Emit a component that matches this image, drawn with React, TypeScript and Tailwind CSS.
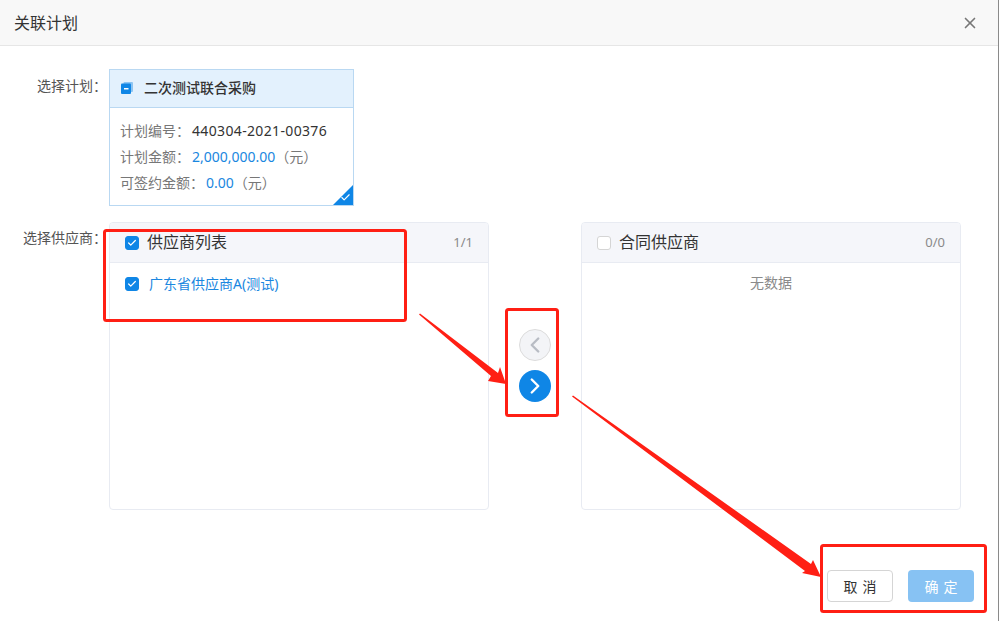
import React from 'react';
import { Check, ChevronLeft, ChevronRight, X } from 'lucide-react';

const FONT = "font-['Noto_Sans','Noto_Sans_CJK_SC',sans-serif]";

const Checkbox: React.FC<{ checked?: boolean }> = ({ checked }) => (
    <span className={`flex h-[14px] w-[14px] shrink-0 items-center justify-center rounded-[3px] border ${checked ? 'border-[#0f86e6] bg-[#0f86e6]' : 'border-[#d5d5d5] bg-white'}`}>
        {checked && <Check className="h-[10px] w-[10px] text-white" strokeWidth={3} />}
    </span>
);

const PlanIcon = () => (
    <svg width="12" height="12" viewBox="0 0 12 12" className="shrink-0">
        <rect x="2.5" y="0" width="9.5" height="10" rx="1" fill="#8cc4f2" />
        <rect x="0" y="1.5" width="10" height="10.5" rx="1" fill="#0f86e6" />
        <rect x="3" y="6" width="4.5" height="1.5" fill="#fff" />
    </svg>
);

const Panel: React.FC<{ title: string; count: string; checked?: boolean; children: React.ReactNode }> = ({ title, count, checked, children }) => (
    <div className="h-[288px] w-[380px] overflow-hidden rounded-[4px] border border-[#e8ebf2] bg-white">
        <div className="flex h-[40px] items-center border-b border-[#e8ebf2] bg-[#f5f6fa] px-[15px]">
            <Checkbox checked={checked} />
            <span className="-mt-[2px] ml-2 text-[16px] text-[#333]">{title}</span>
            <span className="ml-auto text-[13px] text-[#8a8a8a]">{count}</span>
        </div>
        {children}
    </div>
);

const Annotations = () => (
    <svg width="999" height="621" viewBox="0 0 999 621" className="pointer-events-none absolute left-0 top-0">
        <g fill="none" stroke="#ff1f14" strokeWidth="3" strokeLinejoin="round">
            <rect x="104.5" y="230.5" width="301" height="90" rx="2" />
            <rect x="506.5" y="309.5" width="51" height="106" rx="2" />
            <rect x="821.5" y="545.5" width="164" height="66" rx="2" />
        </g>
        <polygon points="419,314.5 420,313.5 498,373 500,367 506,384 488,381 491,376" fill="#ff1f14" />
        <polygon points="572,396.5 573,395.5 811,564 813,560 821,577 802,573 805,571" fill="#ff1f14" />
    </svg>
);

const App: React.FC = () => {
    return (
        <div className={`relative h-[621px] w-[999px] overflow-hidden border-r border-[#8a8a8a] bg-white ${FONT}`}>
            <div className="flex h-[46px] items-center justify-between border-b border-[#e6e6e6] bg-[#f8f8f8] pl-[14px] pr-[19px]">
                <span className="text-[16px] text-[#333]">关联计划</span>
                <X className="h-[18px] w-[18px] text-[#777]" strokeWidth={2.2} />
            </div>

            <div className="flex pt-[23px]">
                <div className="w-[107px] pt-[5px] text-right text-[14px] leading-[24px] text-[#555]">选择计划：</div>
                <div className="relative ml-[2px] h-[137px] w-[245px] overflow-hidden border border-[#b9d8f2] bg-white">
                    <div className="flex h-[38px] items-center gap-[11px] border-b border-[#b9d8f2] bg-[#e3f1fd] pb-[2px] pl-[11px]">
                        <PlanIcon />
                        <span className="text-[14px] font-medium text-[#333]">二次测试联合采购</span>
                    </div>
                    <div className="flex flex-col gap-[2px] pl-[10px] pt-[11px] text-[14px] leading-[24px] text-[#777]">
                        <div className="flex">计划编号：<span className="ml-[2px] tracking-[0.35px] text-[#333]">440304-2021-00376</span></div>
                        <div className="flex">计划金额：<span className="ml-[2px] text-[#1a87e0]">2,000,000.00</span><span>（元）</span></div>
                        <div className="flex">可签约金额：<span className="ml-[2px] text-[#1a87e0]">0.00</span><span>（元）</span></div>
                    </div>
                    <div className="absolute bottom-0 right-0 h-0 w-0 border-b-[20px] border-l-[20px] border-b-[#0f86e6] border-l-transparent" />
                    <Check className="absolute bottom-[2px] right-[2px] h-[11px] w-[11px] text-white" strokeWidth={2.5} />
                </div>
            </div>

            <div className="flex pt-[16px]">
                <div className="w-[107px] pt-[4px] text-right text-[14px] leading-[24px] text-[#555]">选择供应商：</div>
                <div className="ml-[2px] flex items-start">
                    <Panel title="供应商列表" count="1/1" checked>
                        <div className="flex items-center pl-[15px] pt-[11px] leading-[20px]">
                            <Checkbox checked />
                            <span className="ml-[10px] text-[14px] text-[#1a87e0]">广东省供应商A(测试)</span>
                        </div>
                    </Panel>
                    <div className="flex w-[92px] flex-col items-center gap-[9px] pt-[107px]">
                        <div className="flex h-[32px] w-[32px] items-center justify-center rounded-full border border-[#dcdcdc] bg-[#f3f4f7]">
                            <ChevronLeft className="h-[26px] w-[26px] text-[#b8bcc4]" strokeWidth={2.2} />
                        </div>
                        <div className="flex h-[32px] w-[32px] items-center justify-center rounded-full bg-[#0f86e6]">
                            <ChevronRight className="h-[26px] w-[26px] text-white" strokeWidth={2.2} />
                        </div>
                    </div>
                    <Panel title="合同供应商" count="0/0">
                        <div className="pt-[10px] text-center text-[14px] leading-[20px] text-[#8a8a8a]">无数据</div>
                    </Panel>
                </div>
            </div>

            <div className="flex justify-end gap-[15px] pr-[24px] pt-[60px]">
                <button className="h-[32px] w-[66px] rounded-[4px] border border-[#d5d5d5] bg-white text-[14px] [word-spacing:1.5px] text-[#333]">取 消</button>
                <button className="h-[32px] w-[66px] rounded-[4px] bg-[#87c2f3] text-[14px] [word-spacing:1.5px] text-white">确 定</button>
            </div>

            <Annotations />
        </div>
    );
};

export default App;
